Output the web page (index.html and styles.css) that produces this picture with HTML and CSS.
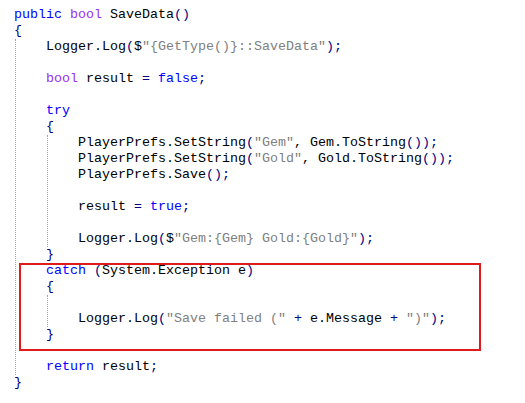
FILE: index.html
```html
<!DOCTYPE html>
<html>
<head>
<meta charset="utf-8">
<link rel="stylesheet" href="styles.css">
</head>
<body>
<div class="code">
  <div class="ln"><span class="kw">public</span> <span class="ty">bool</span> SaveData<span class="p">()</span></div>
  <div class="ln"><span class="p">{</span></div>
  <div class="block">
    <div class="ln">Logger.Log<span class="p">(</span>$<span class="s">"{GetType()}::SaveData"</span><span class="p">);</span></div>
    <div class="ln"> </div>
    <div class="ln"><span class="ty">bool</span> result <span class="p">=</span> <span class="kw">false</span><span class="p">;</span></div>
    <div class="ln"> </div>
    <div class="ln"><span class="kw">try</span></div>
    <div class="ln"><span class="p">{</span></div>
    <div class="block inner">
      <div class="ln">PlayerPrefs.SetString<span class="p">(</span><span class="s">"Gem"</span>, Gem.ToString<span class="p">());</span></div>
      <div class="ln">PlayerPrefs.SetString<span class="p">(</span><span class="s">"Gold"</span>, Gold.ToString<span class="p">());</span></div>
      <div class="ln">PlayerPrefs.Save<span class="p">();</span></div>
      <div class="ln"> </div>
      <div class="ln">result <span class="p">=</span> <span class="kw">true</span><span class="p">;</span></div>
      <div class="ln"> </div>
      <div class="ln">Logger.Log<span class="p">(</span>$<span class="s">"Gem:{Gem} Gold:{Gold}"</span><span class="p">);</span></div>
    </div>
    <div class="ln"><span class="p">}</span></div>
    <div class="ln"><span class="kw">catch</span> <span class="p">(</span>System.Exception e<span class="p">)</span></div>
    <div class="ln"><span class="p">{</span></div>
    <div class="block inner">
      <div class="ln"> </div>
      <div class="ln">Logger.Log<span class="p">(</span><span class="s">"Save failed ("</span> <span class="p">+</span> e.Message <span class="p">+</span> <span class="s">")"</span><span class="p">);</span></div>
    </div>
    <div class="ln"><span class="p">}</span></div>
    <div class="ln"> </div>
    <div class="ln"><span class="kw">return</span> result<span class="p">;</span></div>
  </div>
  <div class="ln"><span class="p">}</span></div>
  <div class="highlight"></div>
</div>
</body>
</html>
```

FILE: styles.css
```css
html, body {
  margin: 0;
  padding: 0;
  background: #ffffff;
}

.code {
  position: relative;
  padding: 7px 0 0 14px;
  font-family: "Liberation Mono", "Courier New", monospace;
  font-size: 13.33px;
  line-height: 16px;
  color: #000000;
}

.ln {
  white-space: pre;
  height: 16px;
}

.block {
  margin-left: 1px;
  padding-left: 30px;
  border-left: 1px dotted #a8a8a8;
}

.block.inner {
  margin-left: 1px;
}

.kw { color: #0000ff; }
.ty { color: #9a30f0; }
.p  { color: #000080; }
.s  { color: #808080; }

.highlight {
  position: absolute;
  left: 19px;
  top: 263px;
  width: 458px;
  height: 84px;
  border: 2px solid #e01b1b;
}
```
